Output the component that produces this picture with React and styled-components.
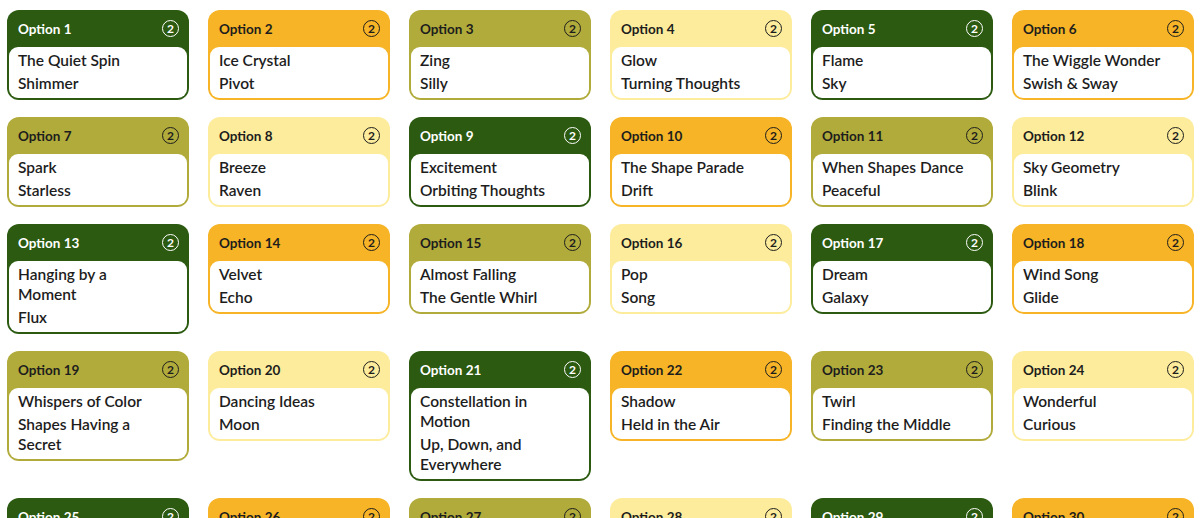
import styled, { createGlobalStyle } from 'styled-components'

const GlobalStyle = createGlobalStyle`
  body {
    margin: 0;
    background: #ffffff;
    font-family: Lato, "Open Sans", sans-serif;
    color: #1d1d1d;
  }
`

const palette = [
  { bg: '#2b5a10', fg: '#ffffff' },
  { bg: '#f6b426', fg: '#1d1d1d' },
  { bg: '#b1ab3b', fg: '#1d1d1d' },
  { bg: '#fcec9c', fg: '#1d1d1d' },
]

const options = [
  ['The Quiet Spin', 'Shimmer'],
  ['Ice Crystal', 'Pivot'],
  ['Zing', 'Silly'],
  ['Glow', 'Turning Thoughts'],
  ['Flame', 'Sky'],
  ['The Wiggle Wonder', 'Swish & Sway'],
  ['Spark', 'Starless'],
  ['Breeze', 'Raven'],
  ['Excitement', 'Orbiting Thoughts'],
  ['The Shape Parade', 'Drift'],
  ['When Shapes Dance', 'Peaceful'],
  ['Sky Geometry', 'Blink'],
  ['Hanging by a Moment', 'Flux'],
  ['Velvet', 'Echo'],
  ['Almost Falling', 'The Gentle Whirl'],
  ['Pop', 'Song'],
  ['Dream', 'Galaxy'],
  ['Wind Song', 'Glide'],
  ['Whispers of Color', 'Shapes Having a Secret'],
  ['Dancing Ideas', 'Moon'],
  ['Constellation in Motion', 'Up, Down, and Everywhere'],
  ['Shadow', 'Held in the Air'],
  ['Twirl', 'Finding the Middle'],
  ['Wonderful', 'Curious'],
  ['Ripple', 'Lantern'],
  ['Spiral', 'Meadow'],
  ['Harmony', 'Tide'],
  ['Bloom', 'Whistle'],
  ['Comet', 'Cloud'],
  ['Sparkle', 'Orbit'],
]

const Grid = styled.div`
  display: grid;
  grid-template-columns: repeat(6, 182px);
  column-gap: 19px;
  row-gap: 17px;
  align-items: start;
  padding: 10px 0 0 7px;
`

const Card = styled.div`
  background: ${p => p.$bg};
  border-radius: 12px;
  padding: 0 2px 2px;
  display: flex;
  flex-direction: column;
`

const Header = styled.div`
  height: 37px;
  display: flex;
  align-items: center;
  justify-content: space-between;
  padding: 0 8px 0 9px;
  color: ${p => p.$fg};
  font-size: 13.5px;
  font-weight: 700;
`

const Badge = styled.span`
  width: 15px;
  height: 15px;
  border: 1.5px solid ${p => p.$fg};
  border-radius: 50%;
  display: flex;
  align-items: center;
  justify-content: center;
  font-size: 12px;
  font-weight: 700;
  line-height: 1;
`

const Body = styled.div`
  background: #ffffff;
  border-radius: 9px;
  padding: 3px 22px 5px 9px;
  display: flex;
  flex-direction: column;
  gap: 3px;
`

const Item = styled.div`
  font-size: 15.5px;
  font-weight: 600;
  line-height: 20px;
  color: #1d1d1d;
`

export default function App() {
  return (
    <>
      <GlobalStyle />
      <Grid>
        {options.map((items, i) => {
          const c = palette[i % 4]
          return (
            <Card key={i} $bg={c.bg}>
              <Header $fg={c.fg}>
                <span>Option {i + 1}</span>
                <Badge $fg={c.fg}>2</Badge>
              </Header>
              <Body>
                {items.map(t => (
                  <Item key={t}>{t}</Item>
                ))}
              </Body>
            </Card>
          )
        })}
      </Grid>
    </>
  )
}
